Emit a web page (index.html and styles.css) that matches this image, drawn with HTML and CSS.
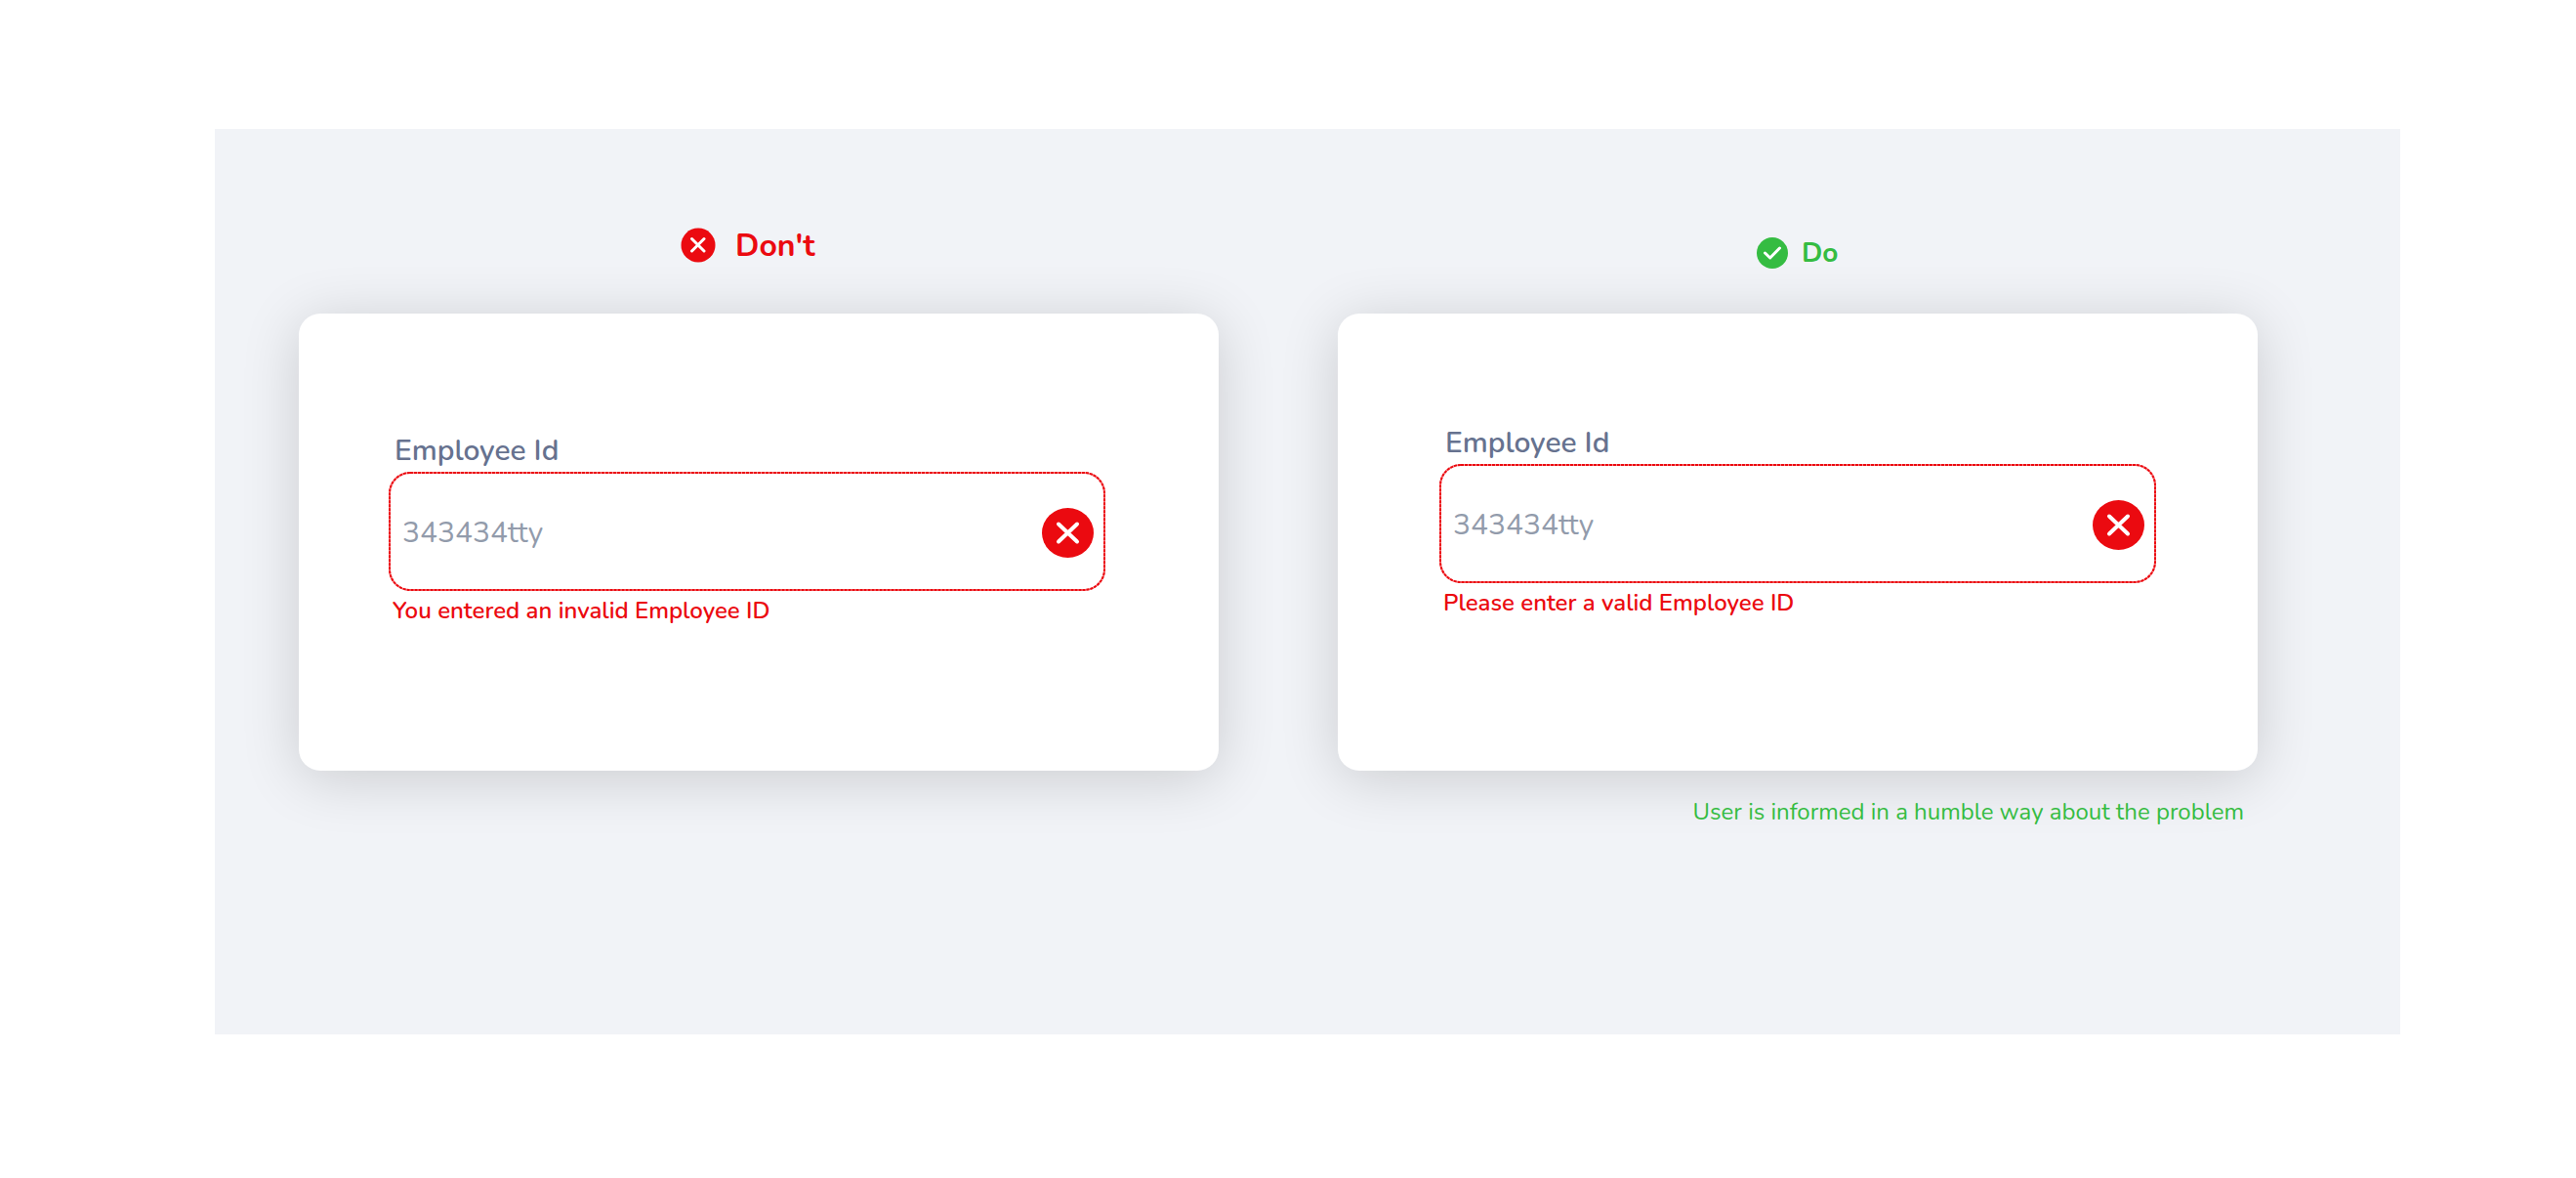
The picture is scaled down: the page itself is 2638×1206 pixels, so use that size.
FILE: index.html
```html
<!DOCTYPE html>
<html lang="en">
<head>
<meta charset="utf-8">
<title>Error message guidelines</title>
<link rel="stylesheet" href="styles.css">
</head>
<body>
<main class="panel">
  <section class="example example-dont">
    <h2 class="verdict verdict-dont">
      <svg class="verdict-icon" viewBox="0 0 36 36" aria-hidden="true"><circle cx="18" cy="18" r="17.5" fill="currentColor"/><path d="M11.5 11.5 24 24M24 11.5 11.5 24" class="mark"/></svg>
      Don't
    </h2>
    <div class="card">
      <label class="label" for="id-dont">Employee Id</label>
      <div class="field">
        <input class="input" id="id-dont" type="text" value="343434tty" aria-describedby="error-dont">
        <svg class="outline" aria-hidden="true"><rect class="outline-base" x="1" y="1" rx="21"/><rect class="outline-dash" x="1" y="1" rx="21"/></svg>
        <svg class="field-icon" viewBox="0 0 53 51" aria-hidden="true"><ellipse cx="26.5" cy="25.5" rx="26.5" ry="25.5" fill="currentColor"/><path d="M17 16.5 36 34.5M36 16.5 17 34.5" class="mark mark-large"/></svg>
      </div>
      <p class="error" id="error-dont">You entered an invalid Employee ID</p>
    </div>
  </section>
  <section class="example example-do">
    <h2 class="verdict verdict-do">
      <svg class="verdict-icon" viewBox="0 0 32 32" aria-hidden="true"><circle cx="16" cy="16" r="16" fill="currentColor"/><path d="M8.5 16 13.7 21 23.5 11" class="mark"/></svg>
      Do
    </h2>
    <div class="card">
      <label class="label" for="id-do">Employee Id</label>
      <div class="field">
        <input class="input" id="id-do" type="text" value="343434tty" aria-describedby="error-do">
        <svg class="outline" aria-hidden="true"><rect class="outline-base" x="1" y="1" rx="21"/><rect class="outline-dash" x="1" y="1" rx="21"/></svg>
        <svg class="field-icon" viewBox="0 0 53 51" aria-hidden="true"><ellipse cx="26.5" cy="25.5" rx="26.5" ry="25.5" fill="currentColor"/><path d="M17 16.5 36 34.5M36 16.5 17 34.5" class="mark mark-large"/></svg>
      </div>
      <p class="error" id="error-do">Please enter a valid Employee ID</p>
    </div>
    <p class="note">User is informed in a humble way about the problem</p>
  </section>
</main>
</body>
</html>
```
FILE: styles.css
```css
* {
  box-sizing: border-box;
}

body {
  margin: 0;
  background: #fff;
  font-family: Nunito, Lato, sans-serif;
  font-variant-ligatures: none;
}

.panel {
  display: grid;
  grid-template-columns: 1fr 1fr;
  gap: 122px;
  margin: 132px 180px 148px 220px;
  padding: 93px 146px 208px 86px;
  background: #f1f3f7;
}

.verdict {
  display: flex;
  align-items: center;
  height: 52px;
  margin: 0 0 44px;
  font-weight: 700;
}

.verdict-dont {
  gap: 20px;
  padding-left: 391px;
  font-size: 32px;
  color: #eb0a10;
}

.verdict-do {
  gap: 14px;
  padding: 16px 0 0 429px;
  font-size: 28px;
  color: #35bc42;
}

.verdict-dont .verdict-icon {
  width: 36px;
  height: 36px;
}

.verdict-do .verdict-icon {
  width: 32px;
  height: 32px;
}

.mark {
  fill: none;
  stroke: #fff;
  stroke-width: 3;
  stroke-linecap: round;
  stroke-linejoin: round;
}

.mark-large {
  stroke-width: 4;
}

.card {
  padding: 120px 116px 144px 92px;
  border-radius: 22px;
  background: #fff;
  box-shadow: 0 8px 60px rgba(0, 0, 0, 0.16);
}

.example-do .card {
  padding: 112px 104px 152px;
}

.label {
  display: block;
  padding: 0 6px;
  font-size: 30px;
  font-weight: 650;
  line-height: 42px;
  color: #66728f;
}

.field {
  position: relative;
}

.input {
  display: block;
  width: 100%;
  height: 122px;
  padding: 2px 76px 0 14px;
  border: 0;
  border-radius: 22px;
  outline: 0;
  background: #fff;
  font: 450 30px Nunito, Lato, sans-serif;
  font-variant-ligatures: none;
  color: #929bab;
}

.outline {
  position: absolute;
  inset: 0;
  width: 100%;
  height: 100%;
  pointer-events: none;
}

.outline rect {
  width: calc(100% - 2px);
  height: calc(100% - 2px);
  fill: none;
  stroke: #eb0a10;
  stroke-width: 2;
}

.outline .outline-base {
  stroke: #f68a8d;
}

.outline .outline-dash {
  stroke-dasharray: 3 1;
}

.field-icon {
  position: absolute;
  top: 37px;
  right: 12px;
  width: 53px;
  height: 51px;
  color: #eb0a10;
}

.error {
  margin: 0;
  padding: 0 4px;
  font-size: 24px;
  font-weight: 650;
  line-height: 40px;
  color: #eb0a10;
}

.note {
  margin: 22px 14px 0 0;
  font-size: 24px;
  line-height: 40px;
  text-align: right;
  color: #35bc42;
}
```
